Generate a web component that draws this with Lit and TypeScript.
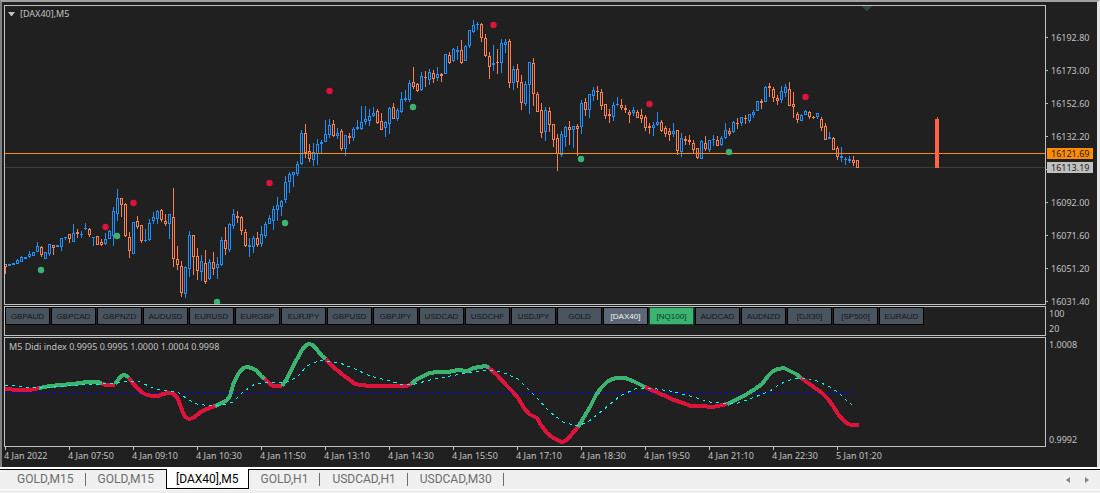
import { LitElement, html, svg, css } from "lit";
import { customElement, state } from "lit/decorators.js";
import { classMap } from "lit/directives/class-map.js";

type Candle = { up: boolean; high: number; top: number; bottom: number; low: number };

// One candle per entry: direction (u/d), then high, body top, body bottom, low.
const CANDLE_DATA = `
d264,264,267,274 u264,264,266,266 u263,263,265,265 u259,260,264,264 u256,257,262,262 u257,257,259,259
u251,254,257,258 u252,252,256,256 u242,246,252,252 d246,247,255,257 u252,252,259,259 u244,244,254,256
d245,245,248,255 u245,245,247,247 u238,238,247,251 u237,237,238,240 d234,234,239,243 u224,233,242,242
d229,232,234,238 u231,234,235,238 u223,228,229,230 d228,229,235,237 u237,237,238,246 d236,236,245,245
d239,242,245,246 u233,239,244,245 u230,231,239,239 u207,211,236,246 u189,198,214,221 d198,198,205,217
d203,204,236,237 d232,237,251,258 u222,222,254,254 d216,221,227,229 d225,225,241,243 u229,240,241,242
u219,223,240,241 u212,217,221,224 u210,211,219,224 d209,210,220,222 d214,221,224,226 u214,214,224,239
d188,217,259,267 d246,259,265,270 d261,266,293,297 u266,267,294,298 u231,235,269,277 d235,235,257,275
d248,256,271,280 u255,261,272,281 d250,263,282,284 u259,262,279,280 d252,262,269,275 u257,264,268,279
u237,240,265,266 d227,240,249,255 u223,224,250,252 u209,214,226,229 d211,216,218,223 d216,217,231,235
d229,232,246,247 u238,245,247,257 u236,238,247,253 d232,238,245,247 u226,234,244,247 u222,224,236,238
u215,218,224,224 u206,209,221,230 u197,205,210,221 u200,201,207,216 u176,182,200,203 u172,174,182,193
u172,172,175,187 u161,164,174,176 u130,133,164,165 d124,133,153,158 d144,151,159,162 u143,152,160,166
u139,144,154,165 u140,142,144,154 u120,134,142,142 u119,125,135,138 d120,124,136,137 u128,133,136,139
d129,131,149,151 u135,135,149,156 d133,136,138,144 u127,129,138,141 u120,127,129,130 u106,122,129,130
u106,119,122,125 u109,116,121,126 u107,113,116,117 d109,111,123,124 d113,121,130,130 u121,122,128,137
u107,108,124,134 d103,107,119,119 u108,110,119,121 u92,99,112,113 u90,98,100,102 u80,83,100,102
d67,82,87,89 d83,84,91,92 u72,76,90,91 d71,77,78,87 u69,72,80,85 d70,73,79,83
u67,74,78,81 d73,74,76,82 u54,54,74,74 d52,55,63,64 u48,49,61,62 u46,50,52,60
d40,50,63,64 u45,46,61,61 u30,30,46,48 u20,25,32,33 u22,24,25,30 d23,24,38,42
d34,38,56,57 d52,56,67,79 u45,63,65,71 d49,62,63,74 u39,43,63,73 u39,42,45,53
d39,41,83,88 u66,69,83,90 d64,69,82,88 d75,82,103,110 u81,84,104,106 u62,62,85,114
d58,63,94,106 d92,94,112,112 d103,110,133,138 u107,110,132,141 d107,111,125,132 d124,124,140,147
d134,138,154,171 u131,134,155,157 u126,127,137,147 d121,127,130,145 u126,126,130,148 d124,126,129,156
u100,103,127,134 d98,102,110,116 u94,94,110,118 u87,90,96,101 d86,91,92,100 d89,92,106,110
d104,104,116,119 d109,114,116,123 u102,105,117,121 u97,104,105,106 d99,105,108,110 d105,108,110,113
d110,112,115,123 u107,110,113,116 d110,112,118,118 d109,115,119,123 d115,117,128,131 d123,126,128,134
u122,125,128,136 u112,122,125,126 d120,122,131,132 d126,128,134,137 d128,131,135,141 u123,131,134,137
d130,130,151,155 u133,138,152,157 d136,139,141,145 d135,140,142,145 d140,143,150,153 d148,148,158,159
u140,141,159,159 d136,143,149,151 u140,140,150,152 u135,139,140,146 d136,140,146,146 u136,138,145,146
u123,130,138,139 d128,131,134,136 u121,122,132,133 d118,123,124,129 u117,117,123,126 d115,118,119,124
u114,114,121,123 u110,112,115,118 u101,101,111,111 d99,101,103,109 u86,87,102,102 d83,86,88,97
d87,89,98,102 d95,98,101,105 u86,91,100,103 u84,87,93,97 d82,89,106,106 d92,104,107,118
d112,114,120,123 u114,115,121,121 u110,111,115,115 d111,112,117,119 d116,117,118,119 u113,113,117,119
d117,119,128,131 d123,126,140,140 u132,137,139,139 d137,138,150,150 d146,148,157,160 u147,156,158,162
u157,159,160,165 u156,159,161,163 d156,160,163,166 d160,160,168,168`;

const CANDLES: Candle[] = CANDLE_DATA.trim().split(/\s+/).map((entry) => {
  const [high, top, bottom, low] = entry.slice(1).split(",").map(Number);
  return { up: entry[0] === "u", high, top, bottom, low };
});

const SELL_DOTS = [[105, 227], [133, 203], [269, 183], [329, 91], [493, 25], [649, 104], [805, 97]];
const BUY_DOTS = [[41, 270], [117, 236], [217, 302], [285, 223], [413, 107], [581, 159], [729, 152]];

// Stretches of the Didi line, alternately falling and rising.
const DIDI = [
  "3,389 20,390 30,390 39,388",
  "39,388 50,386 72,384 87,382 99,382 102,384",
  "102,384 107,385 115,385",
  "115,384 118,380 121,376 124,375 127,376 129,378",
  "129,378 132,382 137,388 143,393 147,395 153,396 158,396 163,394 168,393 173,393 178,399 182,410 185,417 189,419 193,418 197,415 202,411 207,409 215,406",
  "215,406 222,403 227,400 230,396 233,385 236,378 239,373 243,368 247,367 252,368 257,371 261,376 265,379",
  "265,379 269,383 273,386 282,386",
  "282,386 286,380 289,375 293,366 297,359 302,350 306,345 309,344 313,345 318,351 322,356 326,359",
  "326,359 331,365 337,370 343,375 350,380 355,384 361,385 370,386 407,386 411,384",
  "411,384 416,380 423,376 430,373 437,372 448,372 458,370 467,371 474,368 479,367 486,366 489,368",
  "489,368 496,374 508,387 513,392 518,398 524,408 529,414 537,418 541,425 547,433 552,437 557,440 562,442 567,440 572,434 578,427",
  "578,427 584,417 590,407 596,395 601,388 607,382 612,379 617,378 625,378 633,381 639,384 645,387",
  "645,387 654,391 663,395 674,400 683,403 691,406 700,406 713,407 722,405 727,404",
  "727,404 734,401 747,394 755,389 762,384 768,376 773,371 778,369 784,368 790,371 796,374 801,378",
  "801,378 811,385 822,393 828,399 833,406 838,414 843,420 848,424 852,425 859,425",
];

const SIGNAL =
  "5,385 25,387 50,387 80,385 100,384 117,383 130,381 140,382 155,389 178,392 187,399 197,404 210,406 222,405 233,402 243,392 255,384 270,382 285,383 297,377 307,366 320,360 340,363 355,369 370,376 390,381 400,384 415,384 430,380 450,376 468,373 485,370 502,372 518,379 535,396 550,412 563,422 577,426 588,422 603,410 620,396 635,389 650,388 670,391 690,396 710,402 728,404 738,403 755,397 770,391 780,384 793,379 805,378 817,381 830,387 840,394 847,401 855,407";

const PRICES = ["16192.80", "16173.00", "16152.60", "16132.20", "", "16092.00", "16071.60", "16051.20", "16031.40"];

const TIMES = [
  "4 Jan 2022", "4 Jan 07:50", "4 Jan 09:10", "4 Jan 10:30", "4 Jan 11:50", "4 Jan 13:10", "4 Jan 14:30",
  "4 Jan 15:50", "4 Jan 17:10", "4 Jan 18:30", "4 Jan 19:50", "4 Jan 21:10", "4 Jan 22:30", "5 Jan 01:20",
];

const SYMBOLS = [
  "GBPAUD", "GBPCAD", "GBPNZD", "AUDUSD", "EURUSD", "EURGBP", "EURJPY", "GBPUSD", "GBPJPY", "USDCAD",
  "USDCHF", "USDJPY", "GOLD", "[DAX40]", "[NQ100]", "AUDCAD", "AUDNZD", "[DJI30]", "[SP500]", "EURAUD",
];

const TABS = ["GOLD,M15", "GOLD,M15", "[DAX40],M5", "GOLD,H1", "USDCAD,H1", "USDCAD,M30"];

@customElement("price-plot")
class PricePlot extends LitElement {
  static styles = css`
    :host { display: block; }
    .plot { display: block; width: 100%; height: 298px; }
    .crisp { shape-rendering: crispEdges; }
    .up { fill: #1e90ff; }
    .down { fill: #ff7f50; }
    .hollow { fill: #202020; }
    .sell { fill: #dc143c; }
    .buy { fill: #3cb371; }
    .level { fill: #ff8c00; }
    .bid { fill: #34413f; }
    .daily { fill: #ff6347; }
  `;

  private candle(c: Candle, i: number) {
    const x = 5 + i * 4;
    return svg`<g class=${c.up ? "up" : "down"}>
      <rect x=${x} y=${c.high} width="1" height=${Math.max(1, c.low - c.high)}></rect>
      <rect x=${x - 1} y=${c.top} width="3" height=${c.bottom - c.top}></rect>
      ${c.bottom - c.top > 2
        ? svg`<rect class="hollow" x=${x} y=${c.top + 1} width="1" height=${c.bottom - c.top - 2}></rect>`
        : ""}
    </g>`;
  }

  render() {
    return html`<svg class="plot" role="img" aria-label="DAX40 five minute candles">
      <g class="crisp">
        <rect class="bid" x="0" y="161" width="100%" height="1"></rect>
        <g transform="translate(-5 -6)">
          <path class="bid" d="M861 6h11l-5 5h-1z"></path>
          ${CANDLES.map((c, i) => this.candle(c, i))}
        </g>
        <rect class="level" x="0" y="147" width="100%" height="1"></rect>
      </g>
      <g transform="translate(-5 -6)">
        ${SELL_DOTS.map(([x, y]) => svg`<circle class="sell" cx=${x + 0.5} cy=${y} r="3.2"></circle>`)}
        ${BUY_DOTS.map(([x, y]) => svg`<circle class="buy" cx=${x} cy=${y} r="3.2"></circle>`)}
        <path class="daily" d="M935 119h2v-2h1v2h1v49h-4z"></path>
      </g>
    </svg>`;
  }
}

@customElement("didi-plot")
class DidiPlot extends LitElement {
  static styles = css`
    :host { display: block; }
    .plot { display: block; width: 100%; height: 108px; }
    .line { fill: none; stroke-width: 4; stroke-linejoin: round; shape-rendering: crispEdges; }
    .rise { stroke: #3cb371; }
    .fall { stroke: #dc143c; }
    .signal { fill: none; stroke: #00ffff; stroke-width: 1; stroke-dasharray: 3 4; shape-rendering: crispEdges; }
    .zero { stroke: #0000ff; stroke-width: 1; stroke-dasharray: 3 3; shape-rendering: crispEdges; }
  `;

  render() {
    return html`<svg class="plot" role="img" aria-label="Didi index">
      <g transform="translate(-5 -338)">
        <path class="zero" d="M5 393.5H855"></path>
        ${DIDI.map((points, i) => svg`<polyline class="line ${i % 2 ? "rise" : "fall"}" points=${points}></polyline>`)}
        <polyline class="signal" points=${SIGNAL}></polyline>
      </g>
    </svg>`;
  }
}

@customElement("app-root")
class AppRoot extends LitElement {
  static styles = css`
    :host {
      display: block;
      min-height: 100vh;
      background: #f0f0f0;
      font-family: "Noto Sans", "Open Sans", sans-serif;
      font-size: 9px;
      line-height: 11px;
      color: #c0c0c0;
    }
    button { font: inherit; margin: 0; cursor: pointer; }
    .window {
      border: solid;
      border-width: 2px 3px 0 2px;
      border-color: #a0a0a0 #e3e3e3 #fff #808080;
      background: #202020;
      padding: 3px 1px 0 2px;
    }
    .charts { display: grid; grid-template-columns: minmax(0, 1fr) 50px; row-gap: 1px; }
    .panel { position: relative; border: 1px solid #c0c0c0; }
    .caption {
      position: absolute;
      top: 3px;
      left: 4px;
      margin: 0;
      display: flex;
      align-items: center;
      gap: 5px;
      font-size: 9px;
      font-weight: 400;
      line-height: 12px;
      white-space: nowrap;
    }
    .title { top: 2px; left: 3px; }
    .caption .arrow { width: 7px; height: 4px; fill: #c0c0c0; }
    .axis { position: relative; }
    .prices { height: 300px; margin: 0; padding: 16px 0 0; box-sizing: border-box; list-style: none; }
    .price { height: 33px; display: flex; align-items: center; gap: 3px; }
    .price::before { content: ""; width: 2px; height: 1px; background: #c0c0c0; }
    .tag { position: absolute; left: 1px; right: 3px; height: 11px; padding-left: 4px; color: #202020; }
    .level { top: 143px; background: #ff8c00; }
    .bid { top: 157px; background: #c0c0c0; }
    .symbols { display: flex; gap: 1px; min-height: 28px; align-items: flex-start; overflow: hidden; }
    .symbol {
      flex: none;
      box-sizing: border-box;
      width: 45px;
      height: 18px;
      padding: 2px 0 0;
      border: 1px solid #000;
      background: #4a545f;
      color: #121518;
      font: 8px/14px "Liberation Sans", Arial, sans-serif;
    }
    .symbol.current { background: #5b6776; color: #f5f5f5; }
    .symbol.signal { background: #3cb371; color: #0b3a20; border-color: #17452c; }
    .scale { display: flex; flex-direction: column; justify-content: space-between; padding: 2px 0 2px 3px; }
    .times { display: flex; height: 20px; margin: 0; padding: 0; list-style: none; overflow: hidden; }
    .time { flex: none; width: 64px; white-space: nowrap; }
    .time::before { content: ""; display: block; width: 1px; height: 3px; margin-left: 1px; background: #c0c0c0; }
    .tabbar {
      display: flex;
      justify-content: space-between;
      box-sizing: border-box;
      height: 23px;
      border-top: 2px solid #fff;
      border-bottom: 1px solid #fff;
      background: #f0f0f0;
    }
    .tabs { display: flex; flex: 1; border-top: 1px solid #000; padding-left: 5px; }
    .tab {
      position: relative;
      height: 18px;
      padding: 0 12px;
      border: 0;
      background: none;
      color: #6d6d6d;
      font: 12px/18px Roboto, "Noto Sans", sans-serif;
      white-space: nowrap;
    }
    .tab.divided::after {
      content: "";
      position: absolute;
      right: 0;
      top: 3px;
      bottom: 2px;
      width: 1px;
      background: #6d6d6d;
    }
    .tab.active {
      height: 20px;
      margin-top: -1px;
      padding: 0 9px;
      border: 1px solid #000;
      border-top: 0;
      background: #fff;
      color: #000;
    }
    .scroll { display: flex; align-items: center; gap: 15px; padding-right: 11px; border-top: 1px solid #000; }
    .step { display: block; padding: 0; border: 0; background: none; }
    .step svg { display: block; width: 4px; height: 6px; fill: #858585; }
  `;

  @state() private symbol = "[DAX40]";
  @state() private tab = 2;

  render() {
    return html`
      <main class="window">
        <div class="charts">
          <section class="panel">
            <price-plot></price-plot>
            <h1 class="caption title">
              <svg class="arrow" viewBox="0 0 7 4"><path d="M0 0h7L4 4H3z"></path></svg>[DAX40],M5
            </h1>
          </section>
          <div class="axis">
            <ul class="prices">${PRICES.map((p) => html`<li class="price">${p}</li>`)}</ul>
            <div class="tag level">16121.69</div>
            <div class="tag bid">16113.19</div>
          </div>
          <section class="panel symbols">
            ${SYMBOLS.map((s) => html`<button
              class=${classMap({ symbol: true, current: s === this.symbol, signal: s === "[NQ100]" })}
              @click=${() => (this.symbol = s)}>${s}</button>`)}
          </section>
          <div class="axis scale"><span>100</span><span>20</span></div>
          <section class="panel">
            <didi-plot></didi-plot>
            <h2 class="caption">M5 Didi index 0.9995 0.9995 1.0000 1.0004 0.9998</h2>
          </section>
          <div class="axis scale"><span>1.0008</span><span>0.9992</span></div>
        </div>
        <ul class="times">${TIMES.map((t) => html`<li class="time">${t}</li>`)}</ul>
      </main>
      <nav class="tabbar">
        <div class="tabs">
          ${TABS.map((t, i) => html`<button
            class=${classMap({ tab: true, active: i === this.tab, divided: i !== this.tab && i + 1 !== this.tab })}
            @click=${() => (this.tab = i)}>${t}</button>`)}
        </div>
        <div class="scroll">
          <button class="step" aria-label="Previous tabs"><svg viewBox="0 0 4 6"><path d="M4 0v6L0 3z"></path></svg></button>
          <button class="step" aria-label="Next tabs"><svg viewBox="0 0 4 6"><path d="M0 0v6l4-3z"></path></svg></button>
        </div>
      </nav>
    `;
  }
}
